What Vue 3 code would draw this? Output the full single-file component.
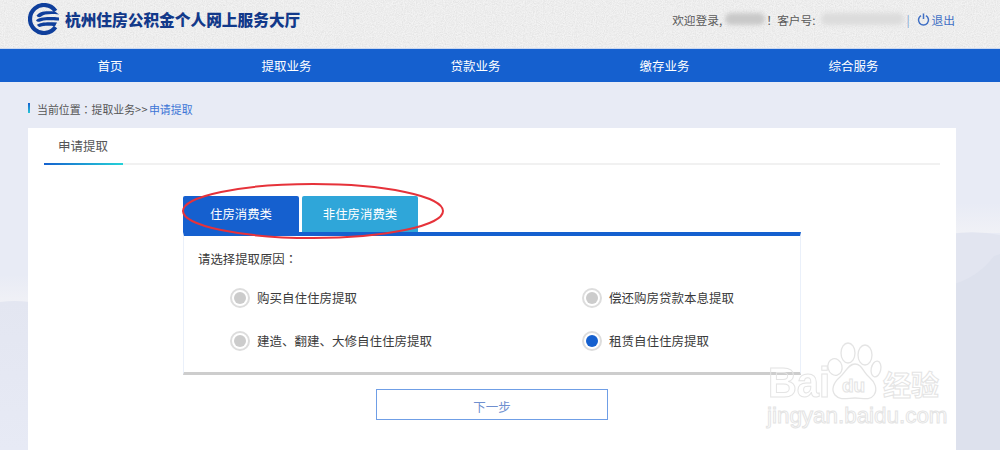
<script setup>
const navItems = ['首页', '提取业务', '贷款业务', '缴存业务', '综合服务']
const reasons = [
  { label: '购买自住住房提取', on: false },
  { label: '偿还购房贷款本息提取', on: false },
  { label: '建造、翻建、大修自住住房提取', on: false },
  { label: '租赁自住住房提取', on: true }
]
</script>

<template>
  <div class="page">
    <svg class="backdrop" width="1000" height="450" viewBox="0 0 1000 450">
      <defs>
        <linearGradient id="mist" x1="0" y1="0" x2="0" y2="1">
          <stop offset="0" stop-color="#e8ebf5" />
          <stop offset="1" stop-color="#f0f1f6" />
        </linearGradient>
        <linearGradient id="ridge" x1="0" y1="0" x2="0" y2="1">
          <stop offset="0" stop-color="#e3e6f1" />
          <stop offset="1" stop-color="#e7eaf5" />
        </linearGradient>
        <filter id="grain" x="0" y="0" width="100%" height="100%">
          <feTurbulence type="fractalNoise" baseFrequency="0.9" numOctaves="2" seed="3" />
          <feColorMatrix values="0 0 0 0 .5  0 0 0 0 .5  0 0 0 0 .5  .35 .35 0 0 -.24" />
        </filter>
      </defs>
      <rect x="0" y="275" width="30" height="27" fill="url(#mist)" />
      <path d="M0 302Q14 300 30 302V450H0Z" fill="url(#ridge)" />
      <rect x="950" y="203" width="50" height="30" fill="url(#mist)" />
      <path d="M950 234Q975 230 1000 235V450H950Z" fill="#e2e5f0" />
      <path d="M950 285Q978 278 994 256L1000 254V450H950Z" fill="#dde1ed" />
      <rect x="0" y="0" width="1000" height="48" fill="#f3f3f3" />
      <rect x="0" y="0" width="1000" height="48" filter="url(#grain)" />
    </svg>

    <div class="content">
      <header class="top">
        <div class="brand">
          <svg class="logo" width="32" height="32" viewBox="0 0 32 32">
            <path d="M27.5 8A14 14 0 1 0 27.5 24" fill="none" stroke="#0f3f9c" stroke-width="4.2" />
            <path d="M8.5 12.8C11 8.5 17 7.6 27 8.6L31 11.4C22 10.6 16 11 13.6 13.2 11.8 14.6 9.6 14.4 8.5 12.8Z" fill="#0f3f9c" />
            <path d="M8 17.2C11 14.4 18 13.4 31 14.4V17.6C20 16.8 15 17.2 12.4 18.4 10.6 19.2 8.8 18.6 8 17.2Z" fill="#0f3f9c" />
            <path d="M9 21.8C12 19.6 18 18.8 29 19.6L27 23.2C20 22.4 15.4 22.8 12.6 23.8 11 24.2 9.6 23.2 9 21.8Z" fill="#0f3f9c" />
          </svg>
          <span class="title">杭州住房公积金个人网上服务大厅</span>
        </div>
        <div class="user">
          <span>欢迎登录,</span>
          <i class="smudge name"></i>
          <span class="bang">！</span>
          <span>客户号:</span>
          <i class="smudge cust"></i>
          <span class="sep">|</span>
          <svg class="power" width="13" height="13" viewBox="0 0 13 13">
            <path d="M4 2.6A5 5 0 1 0 9 2.6" fill="none" stroke="#3f6fc4" stroke-width="1.5" />
            <path d="M6.5 .5V6" fill="none" stroke="#3f6fc4" stroke-width="1.5" />
          </svg>
          <a class="logout">退出</a>
        </div>
      </header>

      <nav class="nav">
        <a v-for="item in navItems" :key="item">{{ item }}</a>
      </nav>

      <div class="crumb">
        <i class="mark"></i>
        <span>当前位置<span class="colon">：</span>提取业务</span><span class="arrows">&gt;&gt;</span><span class="now">申请提取</span>
      </div>

      <main class="card">
        <div class="card-tabs"><span class="card-tab">申请提取</span></div>

        <div class="form">
          <div class="kinds">
            <button class="kind active">住房消费类</button>
            <button class="kind">非住房消费类</button>
          </div>
          <section class="panel">
            <p class="prompt">请选择提取原因<span class="colon">：</span></p>
            <div class="options">
              <label v-for="r in reasons" :key="r.label" class="option">
                <i class="radio" :class="{ on: r.on }"></i>
                <span>{{ r.label }}</span>
              </label>
            </div>
          </section>
          <button class="next">下一步</button>

          <svg class="circle" width="264" height="58" viewBox="0 0 264 58">
            <ellipse cx="132" cy="28" rx="130" ry="27" fill="none" stroke="#e6323a" stroke-width="2" />
          </svg>
        </div>
      </main>
    </div>

    <div class="mark-wm">
      <svg class="paw" width="65" height="65" viewBox="0 0 65 65">
        <g fill="none" stroke="#e4e4e4" stroke-width="1.3">
          <ellipse cx="15" cy="27" rx="7" ry="8.5" transform="rotate(-15 15 27)" />
          <ellipse cx="28" cy="13" rx="7" ry="10" />
          <ellipse cx="45" cy="15" rx="7" ry="10" />
          <ellipse cx="56" cy="29" rx="4.8" ry="8" transform="rotate(12 56 29)" />
          <path d="M35 24C28 24 26 32 20 37 13 43 11 50 15 55 20 61 28 58 35 58 42 58 50 61 54 55 58 49 55 42 49 37 43 32 42 24 35 24Z" />
        </g>
      </svg>
      <span class="wm-bai">Bai</span>
      <span class="wm-du">du</span>
      <span class="wm-jy">经验</span>
      <span class="wm-url">jingyan.baidu.com</span>
    </div>
  </div>
</template>

<style>
html, body { margin: 0; height: 100%; overflow: hidden; }
</style>

<style scoped>
.page {
  position: relative;
  width: 1000px;
  height: 450px;
  overflow: hidden;
  background: #e8ebf5;
  font-family: "Noto Sans CJK SC", "Liberation Sans", sans-serif;
  color: #444;
}
.backdrop { position: absolute; left: 0; top: 0; }
.content { position: relative; }
.top {
  height: 49px;
  box-sizing: border-box;
  padding: 0 45px 0 28px;
  display: flex;
  align-items: center;
  justify-content: space-between;
  border-bottom: 1px solid #c9d6ee;
}
.brand { display: flex; align-items: center; gap: 5px; margin-top: -10px; }
.logo { display: block; }
.title {
  font-size: 15.7px;
  font-weight: 900;
  color: #12398a;
  white-space: nowrap;
}
.user {
  display: flex;
  align-items: center;
  font-size: 11.7px;
  color: #5a5a5a;
  margin-top: -10px;
  white-space: nowrap;
}
.smudge { display: block; height: 12px; background: #c9c9c9; border-radius: 6px; filter: blur(2px); }
.name { width: 40px; margin: 0 1px 0 3px; }
.cust { width: 83px; margin: 0 2px 0 6px; background: #dcdcdc; }
.bang { width: 12px; margin-right: -1px; }
.sep { color: #7d9bd0; margin-right: 7px; }
.power { margin-right: 2px; }
.logout { color: #3f6fc4; }
.nav {
  height: 33px;
  box-sizing: border-box;
  padding-left: 28px;
  display: grid;
  grid-template-columns: 164px repeat(4, 189px);
  background: #1560cf;
  align-items: center;
  justify-items: center;
  color: #fff;
  font-size: 12.5px;
}
.crumb {
  height: 46px;
  box-sizing: border-box;
  padding: 19px 0 0 28px;
  display: flex;
  align-items: flex-start;
  font-size: 10.9px;
  line-height: 16px;
  color: #555;
}
.mark {
  width: 2px;
  height: 10px;
  margin: 2px 7px 0 0;
  background: linear-gradient(180deg, #1560cf, #27c5d8);
}
.colon { font-family: "Noto Sans CJK TC", sans-serif; }
.arrows { letter-spacing: .4px; margin-right: 1px; }
.now { color: #3b74d6; }
.card {
  margin: 0 44px 0 28px;
  height: 322px;
  padding: 0 16px;
  background: #fff;
}
.card-tabs {
  height: 37px;
  box-sizing: border-box;
  border-bottom: 2px solid #f1f1f1;
}
.card-tab {
  display: block;
  box-sizing: border-box;
  width: 79px;
  height: 37px;
  padding: 9px 0 0 14px;
  font-size: 12.5px;
  line-height: 18px;
  color: #555;
  border-bottom: 2px solid transparent;
  border-image: linear-gradient(90deg, #1560cf, #25d3d8) 1;
}
.form { position: relative; width: 618px; margin: 31px 0 0 139px; }
.kinds { display: flex; gap: 3px; height: 36px; }
.kind {
  width: 116px;
  height: 36px;
  padding: 0;
  border: 0;
  border-radius: 2px 2px 0 0;
  background: #2fa6d9;
  color: #fff;
  font: inherit;
  font-size: 12.4px;
}
.active { background: #1560cf; }
.panel {
  box-sizing: border-box;
  height: 143px;
  border-top: 4px solid #1560cf;
  border-left: 1px solid #eaf0fa;
  border-right: 1px solid #eaf0fa;
  border-bottom: 3px solid #cdcdcd;
  padding: 14px 0 0 14px;
}
.prompt { margin: 0; font-size: 12.4px; line-height: 18px; color: #3a3a3a; }
.options {
  margin: 8px 0 0 32px;
  display: grid;
  grid-template-columns: 352px 1fr;
  grid-auto-rows: 43px;
  align-items: center;
}
.option { display: flex; align-items: center; gap: 7px; font-size: 12.5px; color: #3a3a3a; white-space: nowrap; }
.radio {
  box-sizing: border-box;
  width: 20px;
  height: 20px;
  border: 2px solid #ddd;
  border-radius: 50%;
  background: #fff;
  position: relative;
  display: block;
}
.radio::after {
  content: "";
  position: absolute;
  inset: 2px;
  border-radius: 50%;
  background: #ccc;
}
.radio.on::after { background: #1560cf; }
.next {
  display: block;
  box-sizing: border-box;
  width: 232px;
  height: 31px;
  margin: 14px 0 0 193px;
  padding: 3px 0 0;
  background: #fff;
  border: 1px solid #6f9ee6;
  color: #6f8fcf;
  font: inherit;
  font-size: 12.5px;
}
.circle { position: absolute; left: -2px; top: -13px; pointer-events: none; }
.mark-wm {
  position: absolute;
  left: 0;
  top: 0;
  width: 1000px;
  height: 450px;
  pointer-events: none;
  font-family: "Liberation Sans", sans-serif;
  color: transparent;
  -webkit-text-stroke: 1px #e4e4e4;
}
.mark-wm > * { position: absolute; }
.paw { left: 820px; top: 340px; }
.wm-bai { left: 768px; top: 360px; font-size: 42px; font-weight: 700; line-height: 46px; transform: scaleX(.95); transform-origin: left; }
.wm-du { left: 842px; top: 374px; font-size: 19px; font-weight: 700; line-height: 24px; }
.wm-jy { left: 883px; top: 366px; font-size: 28px; line-height: 36px; font-family: "Noto Sans CJK SC", sans-serif; font-weight: 700; }
.wm-url { left: 767px; top: 403px; font-size: 22.4px; line-height: 26px; white-space: nowrap; }
</style>
